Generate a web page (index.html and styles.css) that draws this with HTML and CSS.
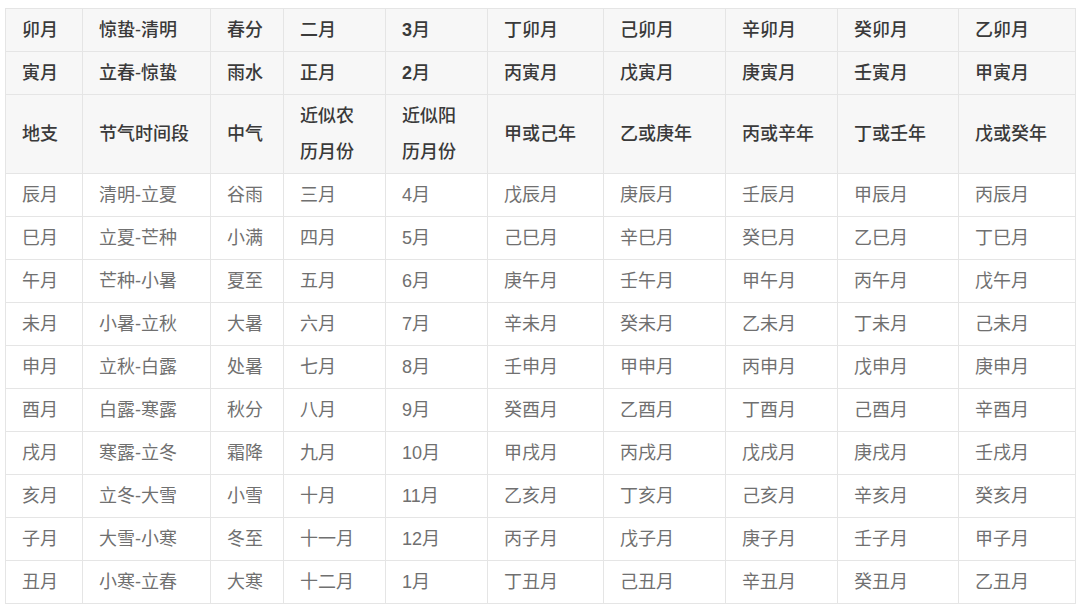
FILE: index.html
```html
<!DOCTYPE html>
<html lang="zh">
<head>
<meta charset="utf-8">
<link rel="stylesheet" href="styles.css">
</head>
<body>
<div class="wrap">
<table class="grid">
<colgroup>
<col class="c1"><col class="c2"><col class="c3"><col class="c4"><col class="c5"><col class="c6"><col class="c7"><col class="c8"><col class="c9"><col class="c10">
</colgroup>
<tbody>
<tr class="head"><td>卯月</td><td>惊蛰-清明</td><td>春分</td><td>二月</td><td><b class="num">3</b>月</td><td>丁卯月</td><td>己卯月</td><td>辛卯月</td><td>癸卯月</td><td>乙卯月</td></tr>
<tr class="head"><td>寅月</td><td>立春-惊蛰</td><td>雨水</td><td>正月</td><td><b class="num">2</b>月</td><td>丙寅月</td><td>戊寅月</td><td>庚寅月</td><td>壬寅月</td><td>甲寅月</td></tr>
<tr class="head"><td>地支</td><td>节气时间段</td><td>中气</td><td>近似农<br>历月份</td><td>近似阳<br>历月份</td><td>甲或己年</td><td>乙或庚年</td><td>丙或辛年</td><td>丁或壬年</td><td>戊或癸年</td></tr>
<tr><td>辰月</td><td>清明-立夏</td><td>谷雨</td><td>三月</td><td>4月</td><td>戊辰月</td><td>庚辰月</td><td>壬辰月</td><td>甲辰月</td><td>丙辰月</td></tr>
<tr><td>巳月</td><td>立夏-芒种</td><td>小满</td><td>四月</td><td>5月</td><td>己巳月</td><td>辛巳月</td><td>癸巳月</td><td>乙巳月</td><td>丁巳月</td></tr>
<tr><td>午月</td><td>芒种-小暑</td><td>夏至</td><td>五月</td><td>6月</td><td>庚午月</td><td>壬午月</td><td>甲午月</td><td>丙午月</td><td>戊午月</td></tr>
<tr><td>未月</td><td>小暑-立秋</td><td>大暑</td><td>六月</td><td>7月</td><td>辛未月</td><td>癸未月</td><td>乙未月</td><td>丁未月</td><td>己未月</td></tr>
<tr><td>申月</td><td>立秋-白露</td><td>处暑</td><td>七月</td><td>8月</td><td>壬申月</td><td>甲申月</td><td>丙申月</td><td>戊申月</td><td>庚申月</td></tr>
<tr><td>酉月</td><td>白露-寒露</td><td>秋分</td><td>八月</td><td>9月</td><td>癸酉月</td><td>乙酉月</td><td>丁酉月</td><td>己酉月</td><td>辛酉月</td></tr>
<tr><td>戌月</td><td>寒露-立冬</td><td>霜降</td><td>九月</td><td>10月</td><td>甲戌月</td><td>丙戌月</td><td>戊戌月</td><td>庚戌月</td><td>壬戌月</td></tr>
<tr><td>亥月</td><td>立冬-大雪</td><td>小雪</td><td>十月</td><td>11月</td><td>乙亥月</td><td>丁亥月</td><td>己亥月</td><td>辛亥月</td><td>癸亥月</td></tr>
<tr><td>子月</td><td>大雪-小寒</td><td>冬至</td><td>十一月</td><td>12月</td><td>丙子月</td><td>戊子月</td><td>庚子月</td><td>壬子月</td><td>甲子月</td></tr>
<tr><td>丑月</td><td>小寒-立春</td><td>大寒</td><td>十二月</td><td>1月</td><td>丁丑月</td><td>己丑月</td><td>辛丑月</td><td>癸丑月</td><td>乙丑月</td></tr>
</tbody>
</table>
</div>
</body>
</html>
```
FILE: styles.css
```css
html, body {
  margin: 0;
  padding: 0;
  background: #ffffff;
}
.wrap {
  padding: 8px 5px 0 5px;
}
.grid {
  border-collapse: collapse;
  table-layout: fixed;
  width: 1070px;
  font-family: "Liberation Sans", "Noto Sans CJK SC", sans-serif;
  font-size: 18px;
  line-height: 36px;
  color: #707070;
}
.c1 { width: 77px; }
.c2 { width: 128px; }
.c3 { width: 73px; }
.c4 { width: 102px; }
.c5 { width: 102px; }
.c6 { width: 116px; }
.c7 { width: 122px; }
.c8 { width: 112px; }
.c9 { width: 121px; }
.c10 { width: 117px; }
.grid td {
  border: 1px solid #e5e5e5;
  padding: 3px 16px;
  vertical-align: middle;
  white-space: nowrap;
}
.grid .head td {
  background: #f7f7f7;
  color: #3a3a3a;
  font-weight: 500;
}
.grid .head .num {
  font-weight: bold;
}
```
